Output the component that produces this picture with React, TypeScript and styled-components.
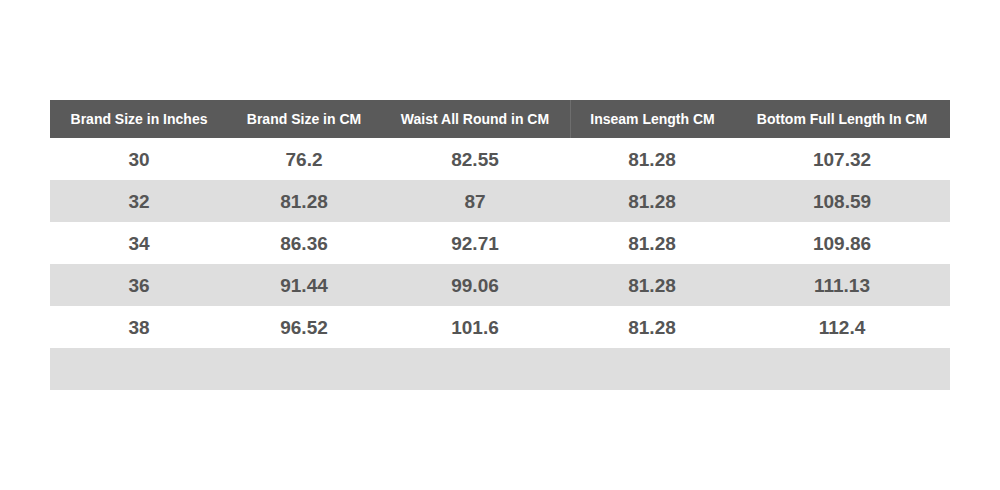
import React from 'react'
import styled, { createGlobalStyle } from 'styled-components'

const GlobalStyle = createGlobalStyle`
  html, body {
    margin: 0;
    padding: 0;
    background: #ffffff;
    font-family: 'Liberation Sans', Arial, sans-serif;
  }
`

const columns = [
  { title: 'Brand Size in Inches', width: 178 },
  { title: 'Brand Size in CM', width: 152 },
  { title: 'Waist All Round in CM', width: 190 },
  { title: 'Inseam Length CM', width: 164 },
  { title: 'Bottom Full Length In CM', width: 216 },
]

const rows = [
  ['30', '76.2', '82.55', '81.28', '107.32'],
  ['32', '81.28', '87', '81.28', '108.59'],
  ['34', '86.36', '92.71', '81.28', '109.86'],
  ['36', '91.44', '99.06', '81.28', '111.13'],
  ['38', '96.52', '101.6', '81.28', '112.4'],
  ['', '', '', '', ''],
]

const gridTemplate = columns.map((c) => `${c.width}px`).join(' ')

export default function App() {
  return (
    <>
      <GlobalStyle />
      <Page>
        <Table>
          <HeaderRow>
            {columns.map((c, i) => (
              <HeaderCell key={c.title} $divider={i === 3}>
                {c.title}
              </HeaderCell>
            ))}
          </HeaderRow>
          {rows.map((r, i) => (
            <Row key={i} $striped={i % 2 === 1}>
              {r.map((v, j) => (
                <Cell key={j}>{v}</Cell>
              ))}
            </Row>
          ))}
        </Table>
      </Page>
    </>
  )
}

const Page = styled.div`
  width: 1000px;
  height: 490px;
  padding: 100px 50px 0;
  box-sizing: border-box;
`

const Table = styled.div`
  width: 900px;
  display: flex;
  flex-direction: column;
`

const HeaderRow = styled.div`
  display: grid;
  grid-template-columns: ${gridTemplate};
  height: 38px;
  background: #5a5a5a;
`

const HeaderCell = styled.div<{ $divider?: boolean }>`
  display: flex;
  align-items: center;
  justify-content: center;
  color: #ffffff;
  font-size: 14px;
  font-weight: bold;
  border-left: ${(p) => (p.$divider ? '1px solid #6e6e6e' : 'none')};
`

const Row = styled.div<{ $striped?: boolean }>`
  display: grid;
  grid-template-columns: ${gridTemplate};
  height: 42px;
  background: ${(p) => (p.$striped ? '#dedede' : '#ffffff')};
`

const Cell = styled.div`
  display: flex;
  align-items: center;
  justify-content: center;
  padding-top: 1px;
  color: #555555;
  font-size: 19px;
  font-weight: bold;
`
